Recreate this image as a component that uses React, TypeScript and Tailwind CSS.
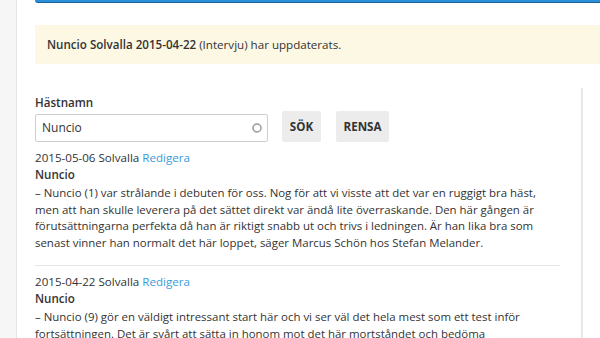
const entries = [
  {
    date: '2015-05-06',
    track: 'Solvalla',
    horse: 'Nuncio',
    lines: [
      '– Nuncio (1) var strålande i debuten för oss. Nog för att vi visste att det var en ruggigt bra häst,',
      'men att han skulle leverera på det sättet direkt var ändå lite överraskande. Den här gången är',
      'förutsättningarna perfekta då han är riktigt snabb ut och trivs i ledningen. Är han lika bra som',
      'senast vinner han normalt det här loppet, säger Marcus Schön hos Stefan Melander.',
    ],
  },
  {
    date: '2015-04-22',
    track: 'Solvalla',
    horse: 'Nuncio',
    lines: [
      '– Nuncio (9) gör en väldigt intressant start här och vi ser väl det hela mest som ett test inför',
      'fortsättningen. Det är svårt att sätta in honom mot det här mortståndet och bedöma',
    ],
  },
];

export default function App() {
  return (
    <div className="flex h-[338px] w-[600px] overflow-hidden bg-white font-['Open_Sans',sans-serif] text-[11.6px] text-[#333]">
      <aside className="w-[17px] shrink-0 border-r border-[#e6e6e6] bg-[#f6f6f6]" />
      <main className="flex min-w-0 flex-1 flex-col pl-[18px]">
        <div className="h-[3px] shrink-0 rounded-bl-[3px] border-b border-[#17609c] bg-[#2a8ed6]" />
        <div className="mt-[22px] flex h-[39px] shrink-0 items-center bg-[#fcf8e3] pl-[12px]">
          <span className="font-semibold">Nuncio Solvalla 2015-04-22</span>
          <span className="ml-[3px]">(Intervju) har uppdaterats.</span>
        </div>
        <div className="mt-[24px] flex shrink-0">
          <section className="w-[546px] shrink-0 pt-[7px]">
            <SearchForm />
            {entries.map((e, i) => (
              <article
                key={i}
                className={i > 0 ? 'w-[525px] border-t border-[#e4e4e4] pt-[8px]' : 'w-[525px] pb-[14px]'}
              >
                <div className="leading-[16.5px]">
                  {e.date} {e.track} <a className="text-[#3a9ad9]">Redigera</a>
                </div>
                <div className="font-semibold leading-[16.5px]">{e.horse}</div>
                <p className="mt-[2px] text-[11.45px] leading-[16.6px]">
                  {e.lines.map((l, j) => (
                    <span key={j} className="block whitespace-nowrap">{l}</span>
                  ))}
                </p>
              </article>
            ))}
          </section>
          <div className="w-[2px] bg-[#e8e8e8]" />
        </div>
      </main>
    </div>
  );
}

function SearchForm() {
  return (
    <div className="mb-[8px]">
      <label className="block font-semibold leading-[16px]">Hästnamn</label>
      <div className="flex items-center">
        <div className="mt-[2px] flex h-[28px] w-[233px] items-center justify-between rounded-[2px] border border-[#cfcfcf] pl-[6px] pr-[4px] text-[12px]">
          <span>Nuncio</span>
          <svg width="12" height="12" viewBox="0 0 12 12">
            <circle cx="6" cy="6" r="4" fill="none" stroke="#9a9a9a" strokeWidth="1.5" />
          </svg>
        </div>
        <button type="button" className="ml-[14px] h-[31px] w-[39px] rounded-[2px] bg-[#ececec] font-bold">
          SÖK
        </button>
        <button type="button" className="ml-[15px] h-[31px] w-[53px] rounded-[2px] bg-[#ececec] font-bold">
          RENSA
        </button>
      </div>
    </div>
  );
}
